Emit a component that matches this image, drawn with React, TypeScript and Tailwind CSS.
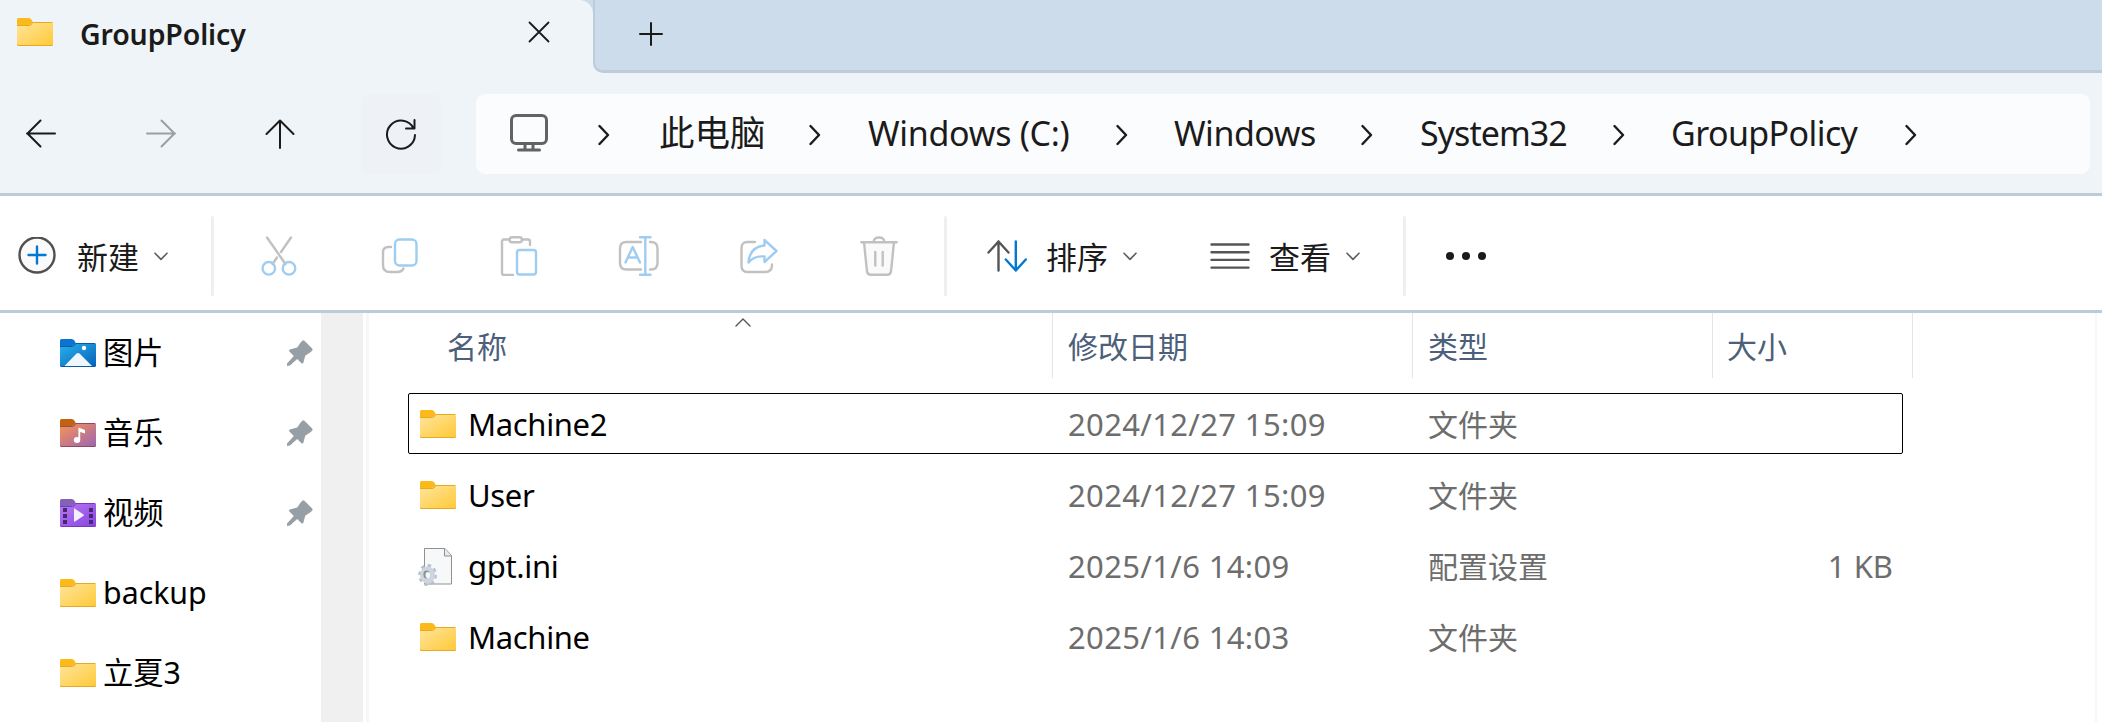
import type { ReactNode } from 'react';

const crumbs = [
  { label: '此电脑', className: 'w-[153px] pl-[3px] text-[35.5px]' },
  { label: 'Windows (C:)', className: 'w-[249px] pl-px text-[34px] tracking-[-0.3px]' },
  { label: 'Windows', className: 'w-[187px] text-[34px] tracking-[-0.5px]' },
  { label: 'System32', className: 'w-[194px] pl-px text-[34px] tracking-[-0.95px]' },
  { label: 'GroupPolicy', className: 'w-[234px] text-[34px] tracking-[-0.6px]' },
];

const quickAccess = [
  { label: '图片', kind: 'pictures', pinned: true },
  { label: '音乐', kind: 'music', pinned: true },
  { label: '视频', kind: 'videos', pinned: true },
  { label: 'backup', kind: 'folder', pinned: false },
  { label: '立夏3', kind: 'folder', pinned: false },
];

const files = [
  { name: 'Machine2', date: '2024/12/27 15:09', type: '文件夹', size: '', kind: 'folder', focused: true },
  { name: 'User', date: '2024/12/27 15:09', type: '文件夹', size: '', kind: 'folder', focused: false },
  { name: 'gpt.ini', date: '2025/1/6 14:09', type: '配置设置', size: '1 KB', kind: 'ini', focused: false },
  { name: 'Machine', date: '2025/1/6 14:03', type: '文件夹', size: '', kind: 'folder', focused: false },
];

const folderColors: Record<string, { tab: string; from: string; to: string; edge: string }> = {
  folder: { tab: '#fcb91a', from: '#ffe59c', to: '#ffc938', edge: '#e8a820' },
  pictures: { tab: '#0a74cf', from: '#27b1ec', to: '#0862b8', edge: '#0a5aa8' },
  music: { tab: '#c2620f', from: '#fb9350', to: '#9c66b4', edge: '#8e4a60' },
  videos: { tab: '#8560b8', from: '#b77cf3', to: '#8a42e0', edge: '#7438c4' },
};

function FolderIcon({ kind = 'folder' }: { kind?: string }) {
  const c = folderColors[kind];
  return (
    <svg width="36" height="28" viewBox="0 0 36 28" className="shrink-0">
      <defs>
        <linearGradient id={`body-${kind}`} x1="0" y1="0" x2="1" y2="1">
          <stop offset="0%" stopColor={c.from} />
          <stop offset="100%" stopColor={c.to} />
        </linearGradient>
      </defs>
      <path d="M0 7H11.5Q13 7 14 5.8L15.5 4H34.5Q36 4 36 5.500V26.500Q36 28 34.500 28H1.500Q0 28 0 26.500Z" fill={c.edge} />
      <path d="M0 8H11.5Q13.5 8 14.6 6.7L16 5H36V25.6Q36 27 34.5 27H1.5Q0 27 0 25.6Z" fill={`url(#body-${kind})`} />
      <path d="M0 1.5Q0 0 1.5 0H11.5Q13.5 0 14.5 1.8L15.8 4.2L14 6Q13 7 11.500 7H0Z" fill={c.tab} />
      {kind === 'pictures' && (
        <g fill="#fff">
          <path d="M4.5 27L16.5 14.6Q18 13.3 19.5 14.6L32 27Z" fill="#eff7fe" />
          <circle cx="24" cy="9" r="2.2" />
        </g>
      )}
      {kind === 'music' && (
        <g fill="#fff">
          <ellipse cx="17" cy="21" rx="3.2" ry="3" />
          <path d="M18.4 8.6L25 11V14.4L20.2 13V21.2H18.4Z" />
        </g>
      )}
      {kind === 'videos' && (
        <g>
          <path d="M14.5 9.5Q14 9 14 10V22Q14 23 15 22.4L23.6 16.8Q24.3 16 23.6 15.4Z" fill="#f3effa" />
          {[9, 15, 21].map((y) => (
            <g key={y} fill="#45286f">
              <rect x="3" y={y} width="4" height="4" />
              <rect x="29" y={y} width="4" height="4" />
            </g>
          ))}
        </g>
      )}
    </svg>
  );
}

function IniIcon() {
  return (
    <svg width="36" height="40" viewBox="0 0 36 40" className="shrink-0 overflow-visible">
      <path d="M4.5 2.5H25L31.5 9.5V38H4.5Z" fill="#f7f8f9" stroke="#8f9192" />
      <path d="M24.5 2.5V10H31.5" fill="#e8eaec" stroke="#8f9192" />
      <ellipse cx="7.6" cy="29" rx="7.8" ry="9.6" fill="none" stroke="#b3bec9" strokeWidth="3" strokeDasharray="3.4 3.42" />
      <ellipse cx="7.6" cy="29" rx="5" ry="6.2" fill="none" stroke="#cdd6df" strokeWidth="5" />
      <ellipse cx="6.6" cy="28.5" rx="3.2" ry="4" fill="#8b939b" />
      <ellipse cx="7.8" cy="29" rx="2.3" ry="3.1" fill="#f4f6f8" />
    </svg>
  );
}

function PinIcon() {
  return (
    <svg width="26" height="26" viewBox="0 0 26 26" fill="#969fa6">
      <path d="M15.8 0.5Q16.6 0 17.4 0.8L25.2 8.6Q26 9.6 25.2 10.6L23.8 12L18.2 15.8L16.4 22.8Q15.6 24.2 14.5 23.2L10.2 19L3 25.4L0 26V23.6L6.8 16L2.4 11.6Q1.6 10.4 2.8 9.6L10.2 7.6L14 2Z" />
    </svg>
  );
}

function Stroke({ width, height, stroke = '#1b1b1b', strokeWidth = 2, children }: {
  width: number;
  height: number;
  stroke?: string;
  strokeWidth?: number;
  children: ReactNode;
}) {
  return (
    <svg
      width={width}
      height={height}
      viewBox={`0 0 ${width} ${height}`}
      fill="none"
      stroke={stroke}
      strokeWidth={strokeWidth}
      strokeLinecap="round"
      strokeLinejoin="round"
      className="shrink-0"
    >
      {children}
    </svg>
  );
}

function ChevronRight() {
  return (
    <Stroke width={12} height={22} strokeWidth={2.4}>
      <path d="M1.5 2L10 11L1.5 20" />
    </Stroke>
  );
}

function ChevronDown() {
  return (
    <Stroke width={14} height={9} stroke="#5c5c5c" strokeWidth={1.6}>
      <path d="M1 1.2L7 7.4L13 1.2" />
    </Stroke>
  );
}

function TabStrip() {
  return (
    <div className="flex h-[73px] bg-[#cddceb]">
      <div className="flex w-[593px] shrink-0 items-start rounded-tr-[14px] bg-[#eff4f9] pl-[17px]">
        <div className="mt-[18px]"><FolderIcon /></div>
        <span className="ml-[27px] mt-[13px] w-[448px] text-[28.5px] font-semibold leading-[42px] tracking-[-0.15px]">GroupPolicy</span>
        <div className="mt-[21px]">
          <Stroke width={22} height={22} strokeWidth={1.8}>
            <path d="M1.5 1.5L20.5 20.5M20.5 1.5L1.5 20.5" />
          </Stroke>
        </div>
      </div>
      <div className="flex-1 bg-[#eff4f9]">
        <div className="h-[73px] rounded-bl-[10px] border-b-[3px] border-l-2 border-[#bdccdb] bg-[#cddceb] pl-[44px] pt-[22px]">
          <Stroke width={24} height={24}>
            <path d="M12 1V23M1 12H23" />
          </Stroke>
        </div>
      </div>
    </div>
  );
}

function NavBar() {
  return (
    <div className="flex h-[123px] items-start border-b-[3px] border-[#bdcad8] bg-[#eff4f9] pl-[26px] pt-[21px]">
      <div className="flex h-20 items-center">
        <Stroke width={30} height={30}><path d="M29 14.5H1M14.5 1.5L1.5 14.5L14.5 27.5" /></Stroke>
        <div className="ml-[90px]">
          <Stroke width={30} height={30} stroke="#9c9fa2"><path d="M1 14.5H29M15.5 1.5L28.5 14.5L15.5 27.5" /></Stroke>
        </div>
        <div className="ml-[89px]">
          <Stroke width={30} height={30}><path d="M15 29V1.5M1.5 15L15 1.5L28.5 15" /></Stroke>
        </div>
      </div>
      <div className="ml-[66px] flex h-20 w-20 items-center justify-center rounded-lg bg-[#eef1f6]">
        <Stroke width={32} height={32}>
          <path d="M28.6 10.5A14 14 0 1 0 30 17M29.5 2V10.5H21" />
        </Stroke>
      </div>
      <div className="ml-[35px] flex h-20 w-[1614px] items-center rounded-[9px] bg-[#fbfcfe] pl-[34px]">
        <div className="-mt-[3px]">
          <Stroke width={38} height={38} stroke="#616365" strokeWidth={3}>
            <rect x="1.5" y="1.5" width="35" height="28" rx="4.5" />
            <path d="M15 30V35M23 30V35M8.5 36H29.5" />
          </Stroke>
        </div>
        <div className="ml-[50px] mt-[2px]"><ChevronRight /></div>
        {crumbs.map((crumb) => (
          <div key={crumb.label} className="flex items-center pl-[46px]">
            <span className={`-mt-[2px] whitespace-nowrap leading-none ${crumb.className}`}>{crumb.label}</span>
            <div className="mt-[2px]"><ChevronRight /></div>
          </div>
        ))}
      </div>
    </div>
  );
}

function Separator() {
  return <div className="h-20 w-[3px] shrink-0 rounded-sm bg-[#efefef]" />;
}

function CommandBar() {
  const gray = '#c1c1c1';
  const blue = '#9fcdf1';
  return (
    <div className="flex h-[117px] items-center border-b-[3px] border-[#bdcad8] bg-white pl-[18px] pt-[6px]">
      <Stroke width={38} height={38} stroke="#505050" strokeWidth={2.4}>
        <circle cx="19" cy="18" r="17.5" fill="#fafafa" />
        <path d="M19 9.5V26.5M10.5 18H27.5" stroke="#0078d4" />
      </Stroke>
      <span className="ml-[21px] mt-[2px] w-[77px] text-[31px]">新建</span>
      <ChevronDown />
      <div className="ml-[43px]"><Separator /></div>
      <div className="ml-[47px] flex items-center">
        <Stroke width={36} height={40} stroke={gray} strokeWidth={2.4}>
          <path d="M6 1.5L24.5 28M30 1.5L20 16M16 21.5L11.5 28" />
          <circle cx="7.8" cy="32.3" r="6.3" stroke={blue} />
          <circle cx="28" cy="32.3" r="6.3" stroke={blue} />
        </Stroke>
        <div className="ml-[84px]">
          <Stroke width={38} height={40} stroke={gray} strokeWidth={2.4}>
            <path d="M10 11H7.5Q2 11 2 16.5V29Q2 36 9 36H16Q21 36 22.5 32.5" />
            <rect x="14" y="3.5" width="21.5" height="26" rx="4.5" stroke={blue} />
          </Stroke>
        </div>
        <div className="ml-[81px]">
          <Stroke width={38} height={40} stroke={gray} strokeWidth={2.4}>
            <path d="M9 3.5H4Q2 3.5 2 5.5V37Q2 39 4 39H13M22 3.5H28Q30 3.5 30 5.5V9" />
            <rect x="9.5" y="1.3" width="12.5" height="5" rx="2.5" />
            <rect x="17" y="14" width="19" height="24.5" rx="2.5" stroke={blue} />
          </Stroke>
        </div>
        <div className="ml-[80px]">
          <Stroke width={42} height={40} stroke={gray} strokeWidth={2.4}>
            <path d="M23 6H8.5Q2 6 2 12.5V27Q2 33.5 8.5 33.5H23M32 6H33Q39.5 6 39.5 12.5V27Q39.5 33.5 33 33.5H32" />
            <path d="M27.3 1.3V38.7M22 1.3H32.5M22 38.7H32.5M7.5 26.5L14.7 11L22 26.5M10 21.5H19.5" stroke={blue} />
          </Stroke>
        </div>
        <div className="ml-[80px]">
          <Stroke width={38} height={40} stroke={gray} strokeWidth={2.4}>
            <path d="M15 6H7.5Q1.5 6 1.5 12V30Q1.5 36 7.5 36H25Q32 36 32 29V28.5" />
            <path d="M24.5 4L36.5 15L24.5 26V20.5Q14 19.5 8.5 26.5Q9.5 11 24.5 9.5Z" stroke={blue} />
          </Stroke>
        </div>
        <div className="ml-[82px]">
          <Stroke width={38} height={40} stroke={gray} strokeWidth={2.4}>
            <path d="M1.3 6.2H36.7M4 6.2L7 35.5Q7.5 38.7 11 38.7H27Q30.5 38.7 31 35.5L34 6.2" fill="#fafafa" />
            <path d="M13.5 6Q14 1.5 19 1.5T24.5 6M15.3 16V29.5M22.7 16V29.5" />
          </Stroke>
        </div>
      </div>
      <div className="ml-[46px]"><Separator /></div>
      <div className="ml-[40px]">
        <Stroke width={40} height={32} stroke="#555" strokeWidth={2.4}>
          <path d="M11.5 30.5V1.5M1.5 12.5L11.5 1.5L21.5 12.5" />
          <path d="M28.8 1.5V30.5M18.8 19.5L28.8 30.5L38.8 19.5" stroke="#0078d4" />
        </Stroke>
      </div>
      <span className="ml-[19px] mt-[2px] w-[77px] text-[31px]">排序</span>
      <ChevronDown />
      <div className="ml-[73px]">
        <Stroke width={40} height={28} stroke="#555" strokeWidth={2.4}>
          <path d="M1.5 2.5H38.5M1.5 10.2H38.5M1.5 17.9H38.5M1.5 25.6H38.5" />
        </Stroke>
      </div>
      <span className="ml-[19px] mt-[2px] w-[77px] text-[31px]">查看</span>
      <ChevronDown />
      <div className="ml-[43px]"><Separator /></div>
      <div className="ml-[40px] flex gap-2">
        {[0, 1, 2].map((n) => (
          <div key={n} className="size-2 rounded-full bg-[#1b1b1b]" />
        ))}
      </div>
    </div>
  );
}

function Sidebar() {
  return (
    <div className="flex w-[369px] shrink-0">
      <div className="w-[321px]">
        {quickAccess.map((item) => (
          <div key={item.label} className="flex h-20 items-center pl-[60px]">
            <FolderIcon kind={item.kind} />
            <span className="-mt-px ml-[7px] w-[184px] text-[30.3px] text-black">{item.label}</span>
            {item.pinned && <PinIcon />}
          </div>
        ))}
      </div>
      <div className="w-[42px] bg-[#f0f0f0]" />
      <div className="ml-[3px] w-[3px] bg-[#f7f7f7]" />
    </div>
  );
}

function FileList() {
  return (
    <div className="relative flex-1">
      <div className="flex h-[65px] items-center text-[30px] text-[#4c607a]">
        <div className="h-full w-[684px] border-r border-[#e5e5e5] pl-[78px] leading-[68px]">名称</div>
        <div className="h-full w-[360px] border-r border-[#e5e5e5] pl-[15px] leading-[68px]">修改日期</div>
        <div className="h-full w-[300px] border-r border-[#e5e5e5] pl-[15px] leading-[68px]">类型</div>
        <div className="h-full w-[200px] border-r border-[#e5e5e5] pl-[14px] leading-[68px]">大小</div>
      </div>
      {/* ascending sort marker sits over the name column */}
      <div className="absolute left-[366px] top-[5px]">
        <Stroke width={16} height={9} stroke="#555" strokeWidth={1.4}>
          <path d="M1 8L8 1L15 8" />
        </Stroke>
      </div>
      <div className="mt-[10px] pl-[39px]">
        {files.map((file) => (
          <div key={file.name} className="flex h-[71px] items-center">
            <div
              className={`flex h-[61px] w-[1495px] items-center rounded-[2px] border pl-[11px] text-[31px] text-[#6d6d6d] ${file.focused ? 'border-black' : 'border-transparent'}`}
            >
              {file.kind === 'ini' ? <IniIcon /> : <FolderIcon />}
              <span className="ml-[12px] mt-px w-[600px] tracking-[-0.35px] text-black">{file.name}</span>
              <span className="mt-px w-[360px] tracking-[0.35px]">{file.date}</span>
              <span className="mt-px w-[300px] text-[30px]">{file.type}</span>
              <span className="mt-px w-[165px] text-right">{file.size}</span>
            </div>
          </div>
        ))}
      </div>
    </div>
  );
}

export default function App() {
  return (
    <div className="h-[722px] w-[2102px] overflow-hidden bg-white font-['Noto_Sans','Noto_Sans_CJK_SC',sans-serif] text-[#1b1b1b]">
      <TabStrip />
      <NavBar />
      <CommandBar />
      <div className="flex h-[409px]">
        <Sidebar />
        <FileList />
        <div className="mr-[5px] w-[2px] bg-[#f7f7f7]" />
      </div>
    </div>
  );
}
